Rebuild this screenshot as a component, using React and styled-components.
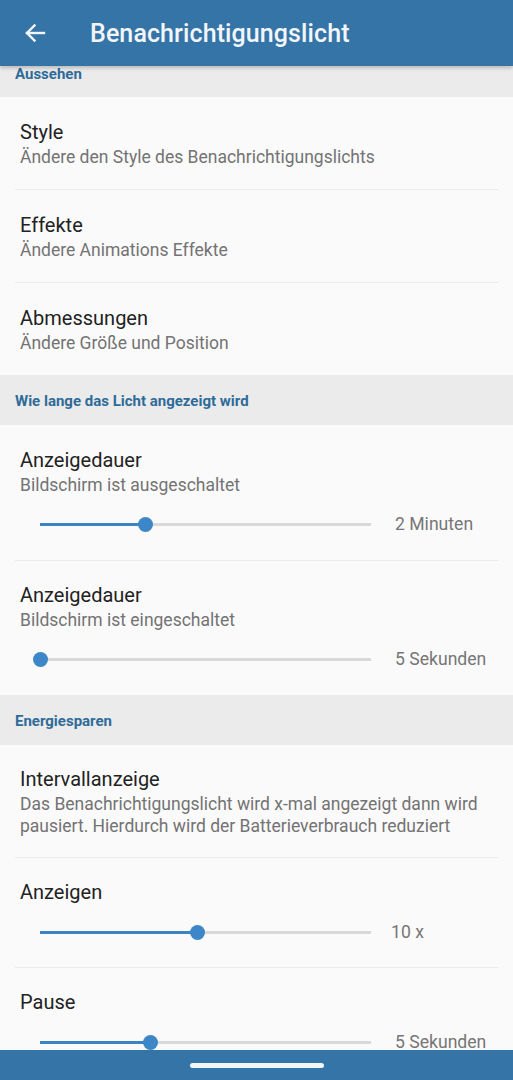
import styled, { createGlobalStyle } from 'styled-components';

const GlobalStyle = createGlobalStyle`
  html, body {
    margin: 0;
    padding: 0;
    background: #fafafa;
    font-family: Roboto, 'Noto Sans', sans-serif;
  }
`;

const Page = styled.div`
  width: 513px;
  height: 1080px;
  overflow: hidden;
  position: relative;
  background: #fafafa;
  display: flex;
  flex-direction: column;
`;

const AppBar = styled.div`
  height: 66px;
  flex-shrink: 0;
  background: #3574a6;
  display: flex;
  align-items: center;
  padding-left: 22px;
  box-shadow: 0 2px 4px rgba(0, 0, 0, 0.22);
  position: relative;
  z-index: 2;
`;

const BackButton = styled.div`
  width: 26px;
  height: 26px;
  display: flex;
  align-items: center;
  justify-content: center;
  margin-right: 42px;
`;

const Title = styled.div`
  color: #f2f6fa;
  font-size: 25px;
  font-weight: 500;
  letter-spacing: 0.1px;
`;

const Content = styled.div`
  flex: 1;
  overflow: hidden;
`;

const SectionHeader = styled.div`
  height: ${(props) => (props.clipped ? '31px' : '50px')};
  background: #ebebeb;
  display: flex;
  align-items: ${(props) => (props.clipped ? 'flex-start' : 'center')};
  padding-left: 15px;
  padding-top: ${(props) => (props.clipped ? '0' : '1px')};
  box-sizing: border-box;
  color: #2f6b99;
  font-size: 15px;
  font-weight: 700;
  line-height: 16px;
`;

const Item = styled.div`
  padding: ${(props) => props.top || '22px'} 15px ${(props) => props.bottom || '22px'} 20px;
`;

const Divider = styled.div`
  height: 1px;
  margin: 0 15px;
  background: #ebebeb;
`;

const ItemTitle = styled.div`
  font-size: 20px;
  line-height: 24px;
  color: #222222;
`;

const ItemSub = styled.div`
  font-size: 17.5px;
  line-height: 22px;
  color: #737373;
  margin-top: 2px;
`;

const SliderRow = styled.div`
  height: 30px;
  margin-top: 13px;
  display: flex;
  align-items: center;
  padding-left: 20px;
`;

const Track = styled.div`
  width: 331px;
  height: 3px;
  background: #d9d9d9;
  position: relative;
  flex-shrink: 0;
`;

const Fill = styled.div`
  position: absolute;
  left: 0;
  top: 0;
  height: 3px;
  background: #3b84c4;
`;

const Thumb = styled.div`
  position: absolute;
  top: -6px;
  width: 15px;
  height: 15px;
  margin-left: -7px;
  border-radius: 50%;
  background: #3d87c8;
`;

const SliderValue = styled.div`
  margin-left: ${(props) => props.offset || '24px'};
  font-size: 17.6px;
  color: #767676;
  white-space: nowrap;
`;

const NavBar = styled.div`
  position: absolute;
  left: 0;
  right: 0;
  bottom: 0;
  height: 30px;
  background: #3574a6;
  display: flex;
  align-items: center;
  justify-content: center;
  z-index: 3;
`;

const Handle = styled.div`
  width: 134px;
  height: 5px;
  border-radius: 3px;
  background: #f2f5f8;
  margin-top: 1px;
`;

function Slider({ value, label, offset }) {
  const px = Math.round(331 * value);
  return (
    <SliderRow>
      <Track>
        <Fill style={{ width: px + 'px' }} />
        <Thumb style={{ left: px + 'px' }} />
      </Track>
      <SliderValue offset={offset}>{label}</SliderValue>
    </SliderRow>
  );
}

export default function App() {
  return (
    <>
      <GlobalStyle />
      <Page>
        <AppBar>
          <BackButton>
            <svg width="24" height="24" viewBox="0 0 24 24" fill="none" stroke="#f2f6fa" strokeWidth="2.4" strokeLinecap="square">
              <path d="M21 12H4" />
              <path d="M11.5 4.5L4 12l7.5 7.5" />
            </svg>
          </BackButton>
          <Title>Benachrichtigungslicht</Title>
        </AppBar>
        <Content>
          <SectionHeader clipped>Aussehen</SectionHeader>
          <Item top="23px" bottom="21px">
            <ItemTitle>Style</ItemTitle>
            <ItemSub>Ändere den Style des Benachrichtigungslichts</ItemSub>
          </Item>
          <Divider />
          <Item top="23px" bottom="21px">
            <ItemTitle>Effekte</ItemTitle>
            <ItemSub>Ändere Animations Effekte</ItemSub>
          </Item>
          <Divider />
          <Item top="23px" bottom="21px">
            <ItemTitle>Abmessungen</ItemTitle>
            <ItemSub>Ändere Größe und Position</ItemSub>
          </Item>
          <SectionHeader>Wie lange das Licht angezeigt wird</SectionHeader>
          <Item top="23px" bottom="21px">
            <ItemTitle>Anzeigedauer</ItemTitle>
            <ItemSub>Bildschirm ist ausgeschaltet</ItemSub>
            <Slider value={0.317} label="2 Minuten" />
          </Item>
          <Divider />
          <Item bottom="21px">
            <ItemTitle>Anzeigedauer</ItemTitle>
            <ItemSub>Bildschirm ist eingeschaltet</ItemSub>
            <Slider value={0} label="5 Sekunden" />
          </Item>
          <SectionHeader>Energiesparen</SectionHeader>
          <Item top="22px" bottom="20px">
            <ItemTitle>Intervallanzeige</ItemTitle>
            <ItemSub>Das Benachrichtigungslicht wird x-mal angezeigt dann wird pausiert. Hierdurch wird der Batterieverbrauch reduziert</ItemSub>
          </Item>
          <Divider />
          <Item bottom="20px">
            <ItemTitle>Anzeigen</ItemTitle>
            <Slider value={0.474} label="10 x" offset="20px" />
          </Item>
          <Divider />
          <Item bottom="20px">
            <ItemTitle>Pause</ItemTitle>
            <Slider value={0.332} label="5 Sekunden" />
          </Item>
        </Content>
        <NavBar>
          <Handle />
        </NavBar>
      </Page>
    </>
  );
}
